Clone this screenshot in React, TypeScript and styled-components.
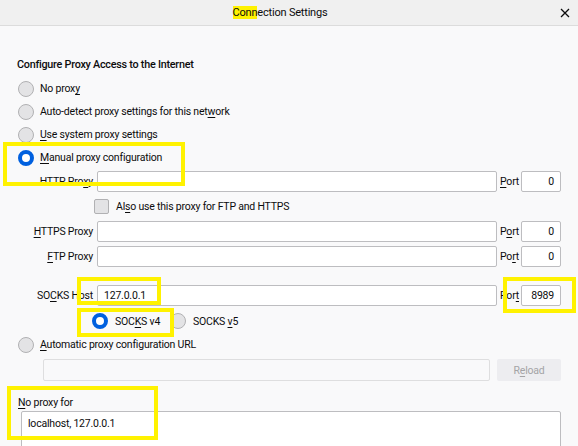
import React from "react";
import styled, { createGlobalStyle } from "styled-components";

const GlobalStyle = createGlobalStyle`
  html, body {
    margin: 0;
    padding: 0;
    background: #f9f9fa;
  }
`;

const Window = styled.div`
  position: relative;
  width: 578px;
  height: 446px;
  overflow: hidden;
  background: #f9f9fa;
  font-family: Roboto, "Noto Sans", sans-serif;
  font-size: 10.5px;
  letter-spacing: -0.2px;
  color: #0c0c0d;
`;

const TitleBar = styled.div`
  height: 25px;
  background: #f0f0f0;
  border-bottom: 1px solid #dcdcdc;
  display: grid;
  grid-template-columns: 1fr auto 1fr 18px;
  align-items: center;
`;

const Title = styled.div`
  grid-column: 2;
  font-size: 11px;
`;

const Mark = styled.span`
  background: #fff200;
`;

const CloseBtn = styled.div`
  grid-column: 4;
  display: flex;
  align-items: center;
`;

const Content = styled.div`
  padding: 0 17px;
`;

const Heading = styled.div`
  margin-top: 31px;
  margin-bottom: 4px;
  font-weight: 500;
  font-size: 10.8px;
  letter-spacing: -0.25px;
  line-height: 16px;
`;

const OptionRow = styled.div<{ indent?: number; top?: number }>`
  display: flex;
  align-items: center;
  height: 23px;
  margin-top: ${(p) => p.top ?? 0}px;
  padding-left: ${(p) => p.indent ?? 1}px;
  gap: 6px;
`;

const Radio = styled.span<{ checked?: boolean }>`
  box-sizing: border-box;
  width: 16px;
  height: 16px;
  border-radius: 50%;
  flex: none;
  background: ${(p) => (p.checked ? "#fff" : "#e3e3e5")};
  border: ${(p) => (p.checked ? "4px solid #0060df" : "1px solid #b1b1b3")};
`;

const Check = styled.span`
  box-sizing: border-box;
  width: 15px;
  height: 15px;
  border-radius: 2px;
  background: #e3e3e5;
  border: 1px solid #b1b1b3;
  flex: none;
  margin-right: 1px;
`;

const Key = styled.u`
  text-decoration-thickness: 1px;
  text-underline-offset: 2px;
`;

const FieldRow = styled.div<{ top: number }>`
  display: flex;
  align-items: center;
  height: 21px;
  margin-top: ${(p) => p.top}px;
`;

const FieldLabel = styled.span`
  width: 76px;
  margin-right: 4px;
  text-align: right;
  white-space: nowrap;
`;

const TextBox = styled.div<{ disabled?: boolean }>`
  box-sizing: border-box;
  flex: 1;
  height: 100%;
  background: ${(p) => (p.disabled ? "#f9f9fa" : "#fff")};
  border: 1px solid ${(p) => (p.disabled ? "#dededf" : "#bdbdc0")};
  border-radius: 2px;
  padding: 0 6px;
  display: flex;
  align-items: center;
`;

const PortLabel = styled.span`
  box-sizing: border-box;
  width: 24px;
  padding-left: 3px;
  white-space: nowrap;
`;

const PortBox = styled(TextBox)`
  flex: none;
  width: 40px;
  justify-content: flex-end;
  padding: 0 6px;
`;

const SocksRow = styled.div`
  display: flex;
  align-items: center;
  height: 24px;
  margin-top: 3px;
  padding-left: 75px;
`;

const SocksOption = styled.span<{ w?: number }>`
  display: flex;
  align-items: center;
  gap: 7px;
  width: ${(p) => (p.w ? `${p.w}px` : "auto")};
`;

const UrlRow = styled.div`
  display: flex;
  height: 22px;
  margin-top: 3px;
  padding-left: 26px;
  gap: 7px;
`;

const ReloadButton = styled.div`
  width: 64px;
  border-radius: 2px;
  background: #ededf0;
  color: #a4a4a6;
  display: flex;
  align-items: center;
  justify-content: center;
`;

const NoProxyLabel = styled.div`
  margin-top: 14px;
  line-height: 16px;
  padding-left: 1px;
`;

const TextArea = styled.div`
  box-sizing: border-box;
  margin-left: 4px;
  height: 60px;
  background: #fff;
  border: 1px solid #bdbdc0;
  border-radius: 2px;
  padding: 4px 6px;
  line-height: 16px;
`;

const Highlight = styled.div<{ x: number; y: number; w: number; h: number }>`
  position: absolute;
  box-sizing: border-box;
  left: ${(p) => p.x}px;
  top: ${(p) => p.y}px;
  width: ${(p) => p.w}px;
  height: ${(p) => p.h}px;
  border: 4px solid #fff200;
  pointer-events: none;
`;

type Field = {
  label: React.ReactNode;
  port: React.ReactNode;
  value: string;
  portValue: string;
  top: number;
};

const proxyFields: Field[] = [
  { label: <><Key>H</Key>TTPS Proxy</>, port: <>P<Key>o</Key>rt</>, value: "", portValue: "0", top: 3 },
  { label: <><Key>F</Key>TP Proxy</>, port: <>Po<Key>r</Key>t</>, value: "", portValue: "0", top: 4 },
  { label: <>SO<Key>C</Key>KS Host</>, port: <>Por<Key>t</Key></>, value: "127.0.0.1", portValue: "8989", top: 18 },
];

const ProxyField = ({ f }: { f: Field }) => (
  <FieldRow top={f.top}>
    <FieldLabel>{f.label}</FieldLabel>
    <TextBox>{f.value}</TextBox>
    <PortLabel>{f.port}</PortLabel>
    <PortBox>{f.portValue}</PortBox>
  </FieldRow>
);

export default function App() {
  return (
    <Window>
      <GlobalStyle />
      <TitleBar>
        <Title>
          <Mark>Conn</Mark>ection Settings
        </Title>
        <CloseBtn>
          <svg width="10" height="10" viewBox="0 0 10 10">
            <path d="M1 1 L9 9 M9 1 L1 9" stroke="#0c0c0d" strokeWidth="1.3" />
          </svg>
        </CloseBtn>
      </TitleBar>
      <Content>
        <Heading>Configure Proxy Access to the Internet</Heading>
        <OptionRow>
          <Radio />
          <span>No prox<Key>y</Key></span>
        </OptionRow>
        <OptionRow>
          <Radio />
          <span>Auto-detect proxy settings for this net<Key>w</Key>ork</span>
        </OptionRow>
        <OptionRow>
          <Radio />
          <span><Key>U</Key>se system proxy settings</span>
        </OptionRow>
        <OptionRow>
          <Radio checked />
          <span><Key>M</Key>anual proxy configuration</span>
        </OptionRow>

        <ProxyField
          f={{ label: <>HTTP Pro<Key>x</Key>y</>, port: <><Key>P</Key>ort</>, value: "", portValue: "0", top: 2 }}
        />

        <OptionRow indent={77} top={3}>
          <Check />
          <span>Al<Key>s</Key>o use this proxy for FTP and HTTPS</span>
        </OptionRow>

        {proxyFields.map((f, i) => (
          <ProxyField key={i} f={f} />
        ))}

        <SocksRow>
          <SocksOption w={78}>
            <Radio checked />
            <span>SOC<Key>K</Key>S v4</span>
          </SocksOption>
          <SocksOption>
            <Radio />
            <span>SOCKS <Key>v</Key>5</span>
          </SocksOption>
        </SocksRow>

        <OptionRow>
          <Radio />
          <span><Key>A</Key>utomatic proxy configuration URL</span>
        </OptionRow>
        <UrlRow>
          <TextBox disabled />
          <ReloadButton>R<Key>e</Key>load</ReloadButton>
        </UrlRow>

        <NoProxyLabel><Key>N</Key>o proxy for</NoProxyLabel>
        <TextArea>localhost, 127.0.0.1</TextArea>
      </Content>

      <Highlight x={3} y={142} w={182} h={44} />
      <Highlight x={77} y={277} w={84} h={28} />
      <Highlight x={503} y={277} w={73} h={36} />
      <Highlight x={77} y={308} w={97} h={29} />
      <Highlight x={7} y={386} w={151} h={54} />
    </Window>
  );
}
